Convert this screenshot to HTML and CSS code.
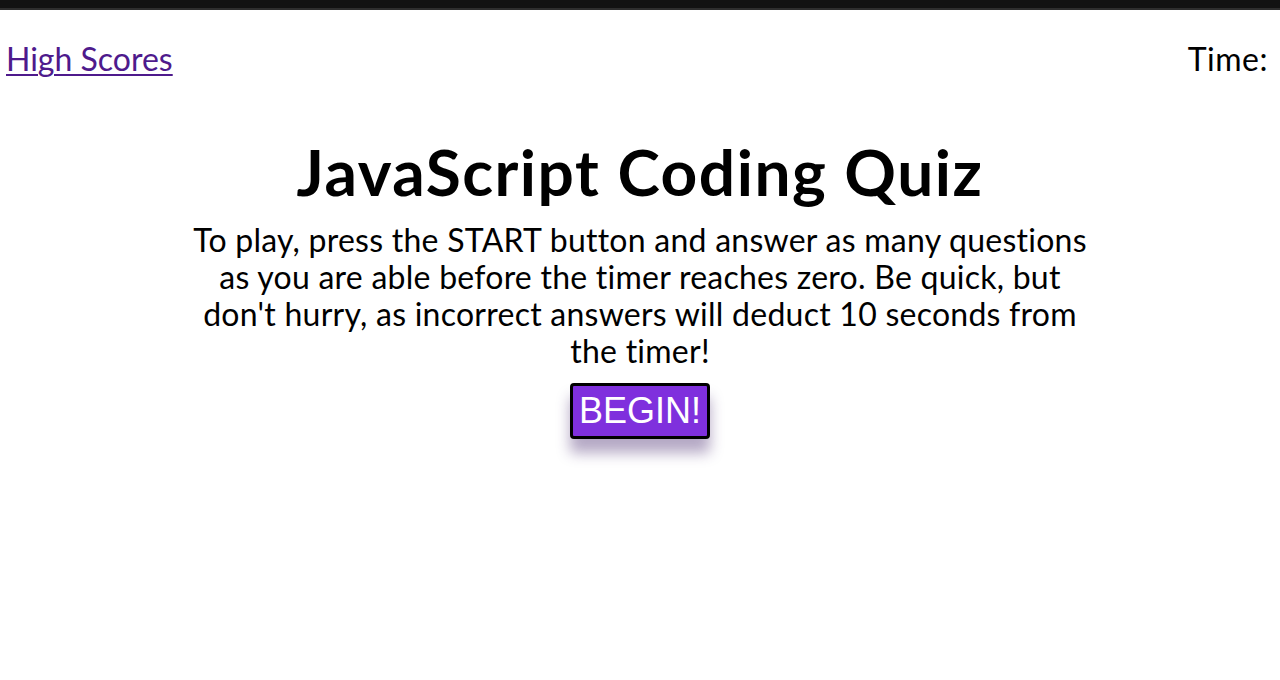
FILE: index.html
```html
<!DOCTYPE html>
<html lang="en">
<head>
<meta charset="utf-8">
<title>JavaScript Coding Quiz</title>
<link rel="stylesheet" href="styles.css">
</head>
<body>
<div class="topbar"></div>
<header class="header">
  <a class="scores-link" href="#">High Scores</a>
  <div class="timer">Time:</div>
</header>
<main class="intro">
  <h1 class="title">JavaScript Coding Quiz</h1>
  <p class="instructions">To play, press the START button and answer as many questions as you are able before the timer reaches zero. Be quick, but don't hurry, as incorrect answers will deduct 10 seconds from the timer!</p>
  <button class="begin-btn" type="button">BEGIN!</button>
</main>
</body>
</html>
```
FILE: styles.css
```css
html, body {
  margin: 0;
  padding: 0;
  background: #fff;
}
body {
  font-family: "Lato", "Open Sans", sans-serif;
  font-size: 32px;
  color: #000;
  font-variant-ligatures: none;
  min-height: 100vh;
}
.topbar {
  height: 8px;
  background: #121212;
  border-bottom: 2px solid #2e2e2e;
}
.header {
  display: flex;
  justify-content: space-between;
  align-items: flex-start;
  margin-top: 30px;
  padding: 0 12px 0 6px;
  line-height: 37px;
}
.scores-link {
  color: #4e1a8c;
  text-decoration: underline;
  text-decoration-thickness: 2px;
  text-underline-offset: 3px;
}
.timer {
  letter-spacing: 0.5px;
}
.intro {
  display: flex;
  flex-direction: column;
  align-items: center;
  text-align: center;
  margin-top: 58px;
  padding-bottom: 60px;
}
.title {
  margin: 0;
  font-size: 64px;
  line-height: 74px;
  font-weight: 700;
  letter-spacing: 1.5px;
}
.instructions {
  margin: 12px 0 0;
  width: 900px;
  line-height: 37px;
  letter-spacing: 0.25px;
}
.begin-btn {
  margin-top: 14px;
  font-family: "Liberation Sans", Arial, sans-serif;
  font-size: 36px;
  line-height: 44px;
  color: #fff;
  background: #7f30dd;
  border: 3px solid #000;
  border-radius: 4px;
  padding: 3px 6px 3px 6px;
  box-shadow: 0 14px 14px rgba(70, 40, 110, 0.4);
  cursor: pointer;
}
```
